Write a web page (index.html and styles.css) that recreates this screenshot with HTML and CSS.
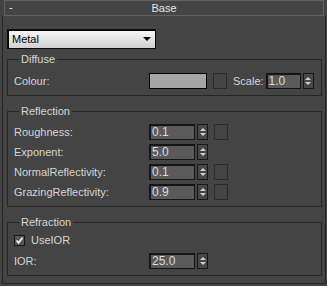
FILE: index.html
```html
<!DOCTYPE html>
<html lang="en">
<head>
    <meta charset="UTF-8">
    <title>Base</title>
    <link rel="stylesheet" href="styles.css">
</head>
<body>
    <div class="rollout-head">
        <span class="collapse">-</span>
        <span class="rollout-title">Base</span>
    </div>

    <div class="rollout-body">
        <div class="dropdown">
            <span>Metal</span>
            <span class="dropdown-arrow"></span>
        </div>

        <!-- Diffuse -->
        <fieldset class="group group-diffuse">
            <legend>Diffuse</legend>
            <div class="row">
                <span class="label">Colour:</span>
                <div class="swatch"></div>
                <div class="map-btn"></div>
                <span class="inline-label">Scale:</span>
                <div class="spinner">
                    <div class="spinner-field narrow">1.0</div>
                    <div class="spin"><span class="up"></span><span class="down"></span></div>
                </div>
            </div>
        </fieldset>

        <!-- Reflection -->
        <fieldset class="group">
            <legend>Reflection</legend>
            <div class="row">
                <span class="label">Roughness:</span>
                <div class="spinner">
                    <div class="spinner-field">0.1</div>
                    <div class="spin"><span class="up"></span><span class="down"></span></div>
                </div>
                <div class="map-btn"></div>
            </div>
            <div class="row">
                <span class="label">Exponent:</span>
                <div class="spinner">
                    <div class="spinner-field">5.0</div>
                    <div class="spin"><span class="up"></span><span class="down"></span></div>
                </div>
            </div>
            <div class="row">
                <span class="label">NormalReflectivity:</span>
                <div class="spinner">
                    <div class="spinner-field">0.1</div>
                    <div class="spin"><span class="up"></span><span class="down"></span></div>
                </div>
                <div class="map-btn"></div>
            </div>
            <div class="row">
                <span class="label">GrazingReflectivity:</span>
                <div class="spinner">
                    <div class="spinner-field">0.9</div>
                    <div class="spin"><span class="up"></span><span class="down"></span></div>
                </div>
                <div class="map-btn"></div>
            </div>
        </fieldset>

        <!-- Refraction -->
        <fieldset class="group group-refraction">
            <legend>Refraction</legend>
            <div class="row check-row">
                <svg class="checkbox" width="11" height="11" viewBox="0 0 11 11">
                    <rect x="0.5" y="0.5" width="10" height="10" fill="#575757" stroke="#151515"/>
                    <path d="M2.5 5.5 L4.5 7.8 L8.5 2.8" fill="none" stroke="#f2f2f2" stroke-width="1.8"/>
                </svg>
                <span>UseIOR</span>
            </div>
            <div class="row">
                <span class="label">IOR:</span>
                <div class="spinner">
                    <div class="spinner-field">25.0</div>
                    <div class="spin"><span class="up"></span><span class="down"></span></div>
                </div>
            </div>
        </fieldset>
    </div>
</body>
</html>
```

FILE: styles.css
```css
/* General */
* {
    box-sizing: border-box;
}

body {
    margin: 0;
    background: #444444;
    font-family: "Liberation Sans", Arial, sans-serif;
    font-size: 11px;
    color: #d6d6d6;
}

/* Rollout header */
.rollout-head {
    position: relative;
    margin: 0 3px 0 4px;
    height: 16px;
    border: 1px solid #626262;
    background: #454545;
    display: flex;
    align-items: center;
    justify-content: center;
}

.collapse {
    position: absolute;
    left: 4px;
    top: 0;
    line-height: 13px;
    color: #e4e4e4;
}

.rollout-title {
    color: #e6e6e6;
    line-height: 14px;
}

.rollout-body {
    margin-left: 2px;
    width: 324px;
    border: 1px solid #262626;
    border-top: none;
    padding: 13px 3px 7px 4px;
}

/* Dropdown */
.dropdown {
    width: 149px;
    height: 20px;
    border: 1px solid #0a0a0a;
    box-shadow: inset 1px 1px 0 #000;
    background: linear-gradient(#f7f7f7, #d2d2d2);
    color: #000;
    display: flex;
    align-items: center;
    justify-content: space-between;
    padding: 0 4px 0 4px;
}

.dropdown-arrow {
    width: 0;
    height: 0;
    border-left: 4px solid transparent;
    border-right: 4px solid transparent;
    border-top: 4px solid #000;
}

/* Groups */
.group {
    margin: 9px 0 0 0;
    padding: 7px 6px 6px 6px;
    border: 1px solid #262626;
    display: flex;
    flex-direction: column;
    gap: 4px;
}

.group-diffuse {
    margin-top: 4px;
    padding-top: 8px;
}

.group-refraction {
    padding-top: 4px;
    gap: 5px;
}

.group legend {
    padding: 0 2px;
    margin-left: 5px;
    line-height: 12px;
    color: #d6d6d6;
}

.row {
    display: flex;
    align-items: center;
    height: 16px;
}

.label {
    width: 135px;
}

.inline-label {
    margin: 0 2px 0 6px;
}

/* Colour swatch and map buttons */
.swatch {
    width: 58px;
    height: 16px;
    border: 1px solid #050505;
    background: #a6a6a6;
}

.map-btn {
    width: 14px;
    height: 16px;
    border: 1px solid #2a2a2a;
    margin-left: 6px;
}

/* Spinners */
.spinner {
    display: flex;
    gap: 2px;
}

.spinner-field {
    width: 46px;
    height: 16px;
    background: #5a5a5a;
    border: 1px solid #151515;
    border-top-width: 2px;
    border-left-width: 2px;
    padding-left: 1px;
    line-height: 13px;
    color: #dcdcdc;
    font-size: 12px;
}

.spinner-field.narrow {
    width: 35px;
}

.spin {
    width: 11px;
    height: 16px;
    border: 1px solid #171717;
    background: #474747;
    display: flex;
    flex-direction: column;
    align-items: center;
    justify-content: space-evenly;
}

.spin .up,
.spin .down {
    width: 0;
    height: 0;
    border-left: 3px solid transparent;
    border-right: 3px solid transparent;
}

.spin .up {
    border-bottom: 3px solid #cfcfcf;
}

.spin .down {
    border-top: 3px solid #cfcfcf;
}

/* Checkbox row */
.check-row {
    gap: 6px;
}
```
